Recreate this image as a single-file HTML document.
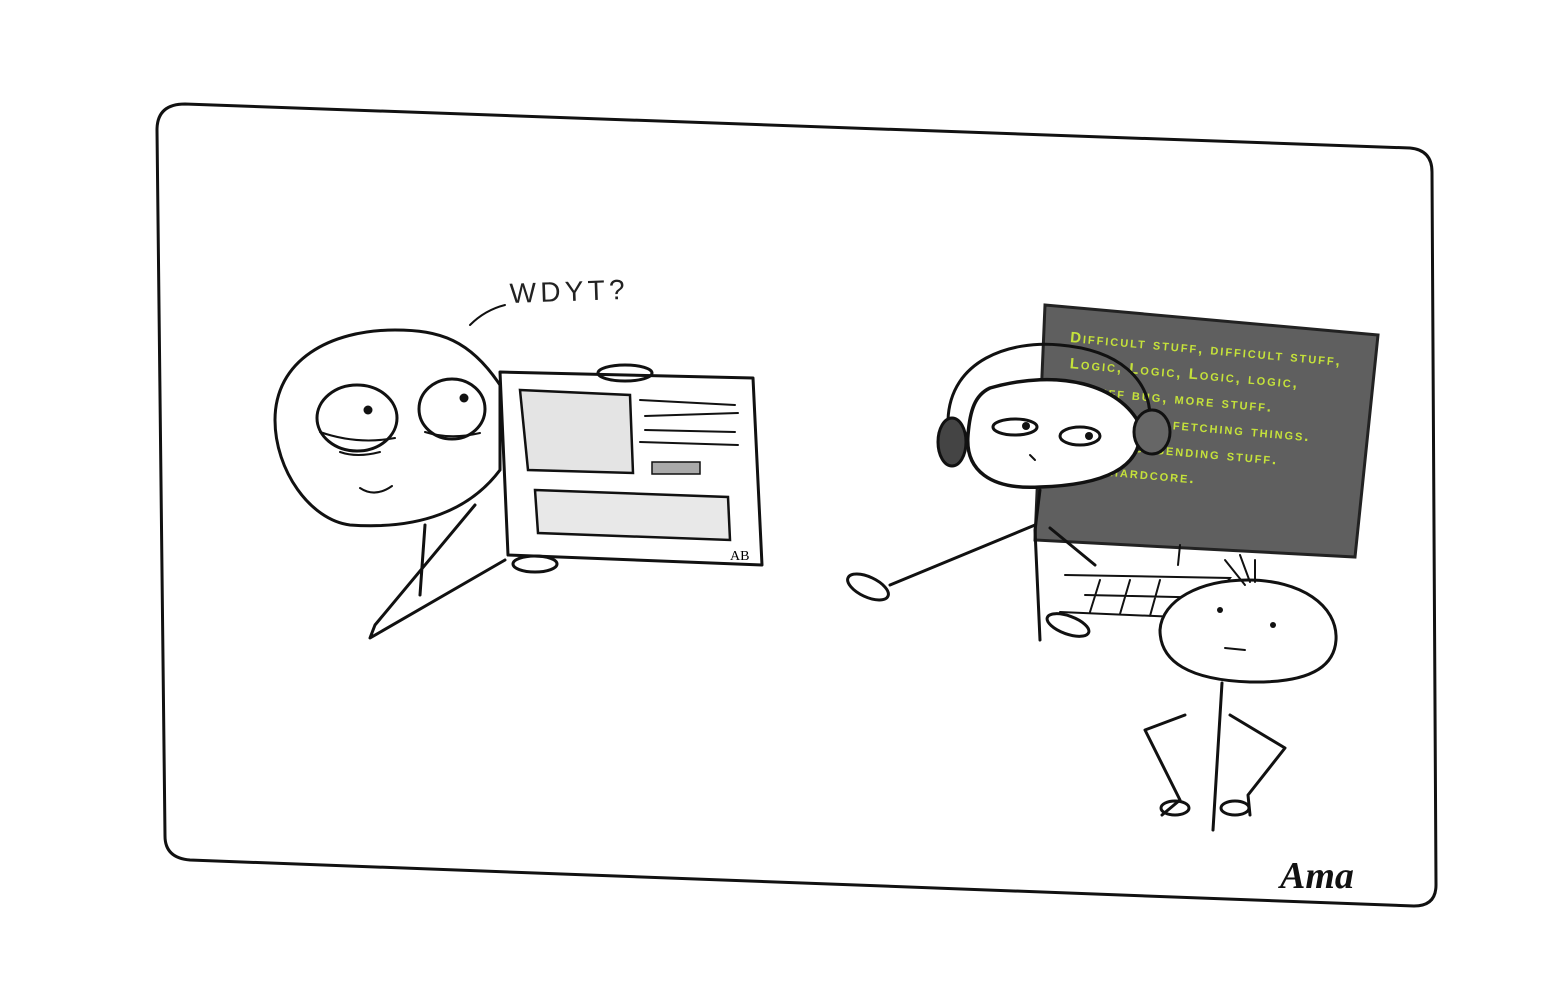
<!DOCTYPE html>
<html><head><meta charset="utf-8"><style>
html,body{margin:0;padding:0;background:#fff;width:1566px;height:990px;overflow:hidden}
svg{display:block}
.s{fill:none;stroke:#111;stroke-width:3;stroke-linecap:round;stroke-linejoin:round}
.t{fill:none;stroke:#111;stroke-width:2;stroke-linecap:round}
.g{font-family:"Liberation Sans",sans-serif;font-size:15px;font-weight:bold;fill:#c5e23a;font-variant:small-caps;letter-spacing:2px}
</style></head><body>
<svg width="1566" height="990" viewBox="0 0 1566 990">
<path class="s" stroke-width="4" d="M185 104 L1410 148 Q1432 150 1432 172 L1436 885 Q1436 906 1414 906 L190 860 Q165 858 165 836 L157 130 Q157 104 185 104Z"/>
<path class="s" d="M395 330 C330 330 275 360 275 420 C275 470 310 520 350 525 C420 530 470 510 500 470 L500 385 C470 340 440 330 395 330Z"/>
<ellipse class="s" cx="357" cy="418" rx="40" ry="33"/>
<ellipse class="s" cx="452" cy="409" rx="33" ry="30"/>
<circle cx="368" cy="410" r="4.5" fill="#111"/><circle cx="464" cy="398" r="4.5" fill="#111"/>
<path class="t" d="M320 432 Q357 445 395 438 M340 452 Q357 458 380 452 M425 432 Q450 440 480 433"/>
<path class="t" d="M360 488 Q375 498 392 486"/>
<path class="t" d="M470 325 Q485 310 505 305"/>
<text x="510" y="303" font-family="Liberation Sans,sans-serif" font-size="28" fill="#222" transform="rotate(-2 510 303)" textLength="115">WDYT?</text>
<path class="s" d="M425 525 L420 595 M475 505 L375 625 L370 638 L505 560"/>
<path class="s" d="M500 372 L753 378 L762 565 L508 555Z"/>
<ellipse class="s" cx="625" cy="373" rx="27" ry="8" fill="#fff"/>
<path d="M520 390 L630 395 L633 473 L528 470Z" fill="#e4e4e4" stroke="#111" stroke-width="2.5"/>
<path d="M535 490 L728 497 L730 540 L538 533Z" fill="#e8e8e8" stroke="#111" stroke-width="2.5"/>
<path class="t" d="M640 400 L735 405 M645 416 L738 413 M645 430 L735 432 M640 442 L738 445"/>
<rect x="652" y="462" width="48" height="12" fill="#aaa" stroke="#111" stroke-width="1.5"/>
<ellipse class="s" cx="535" cy="564" rx="22" ry="8" fill="#fff"/>
<text x="730" y="560" font-size="14" font-family="Liberation Serif,serif">AB</text>
<path d="M1045 305 L1378 335 L1355 557 L1035 540Z" fill="#5f5f5f" stroke="#222" stroke-width="3"/>
<g transform="rotate(5 1070 340)">
<text class="g" x="1070" y="342">Difficult stuff, difficult stuff,</text>
<text class="g" x="1072" y="368">Logic, Logic, Logic,   logic,</text>
<text class="g" x="1085" y="394">stuff   bug, more stuff.</text>
<text class="g" x="1180" y="420">fetching things.</text>
<text class="g" x="1130" y="446">ifc. sending stuff.</text>
<text class="g" x="1065" y="472">thing, hardcore.</text>
</g>
<path d="M990 388 C1060 368 1120 385 1140 425 C1145 470 1100 485 1040 487 C990 490 965 470 968 435 C970 410 975 395 990 388Z" fill="#fff" stroke="#111" stroke-width="3.5"/>
<path class="s" stroke-width="4" d="M948 420 C950 360 1010 340 1060 345 C1120 350 1150 380 1150 418"/>
<ellipse cx="952" cy="442" rx="14" ry="24" fill="#444" stroke="#111" stroke-width="3"/>
<ellipse cx="1152" cy="432" rx="18" ry="22" fill="#666" stroke="#111" stroke-width="3"/>
<ellipse class="s" cx="1015" cy="427" rx="22" ry="8"/><ellipse class="s" cx="1080" cy="436" rx="20" ry="9"/>
<circle cx="1026" cy="426" r="4" fill="#111"/><circle cx="1089" cy="436" r="4" fill="#111"/>
<path class="t" d="M1030 455 L1035 460"/>
<path class="s" d="M1035 525 L890 585 M1040 490 L1035 530 L1040 640 M1050 528 L1095 565"/>
<ellipse class="s" cx="868" cy="587" rx="22" ry="10" transform="rotate(25 868 587)"/>
<ellipse class="s" cx="1068" cy="625" rx="22" ry="9" transform="rotate(20 1068 625)"/>
<path class="t" d="M1065 575 L1230 578 L1200 618 L1060 612 M1085 595 L1220 598 M1100 580 L1090 612 M1130 580 L1120 614 M1160 580 L1150 616 M1180 545 L1178 565"/>
<path d="M1248 580 C1300 580 1338 605 1336 640 C1334 672 1300 683 1250 682 C1190 680 1160 662 1160 630 C1162 600 1200 580 1248 580Z" fill="#fff" stroke="#111" stroke-width="3"/>
<path class="t" d="M1225 560 L1245 585 M1240 555 L1250 582 M1255 560 L1255 582"/>
<circle cx="1220" cy="610" r="3" fill="#111"/><circle cx="1273" cy="625" r="3" fill="#111"/>
<path class="t" d="M1225 648 L1245 650"/>
<path class="s" d="M1222 683 L1213 830 M1185 715 L1145 730 L1180 800 L1162 815 M1230 715 L1285 748 L1248 795 L1250 815"/>
<ellipse class="s" cx="1175" cy="808" rx="14" ry="7"/><ellipse class="s" cx="1235" cy="808" rx="14" ry="7"/>
<text x="1280" y="888" font-family="Liberation Serif,serif" font-style="italic" font-weight="bold" font-size="38" fill="#111">Ama</text>
</svg>
</body></html>
